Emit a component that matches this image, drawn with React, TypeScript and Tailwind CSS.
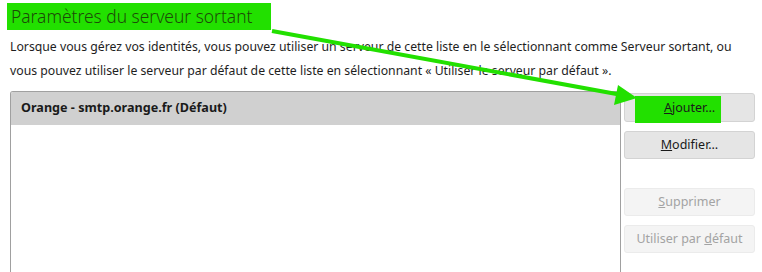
import React from "react";

function Btn({
  children,
  disabled,
  className = "",
}: {
  children: React.ReactNode;
  disabled?: boolean;
  className?: string;
}) {
  return (
    <div
      className={`relative h-[28px] pt-[1px] rounded-[3px] border flex items-center justify-center text-[12.5px] ${
        disabled
          ? "bg-[#f4f4f4] border-[#ebebeb] text-[#a3a3a3]"
          : "bg-[#e5e5e5] border-[#d3d3d3] text-[#1a1a1a]"
      } ${className}`}
    >
      {children}
    </div>
  );
}

export default function App() {
  return (
    <div className="relative w-[762px] h-[272px] overflow-hidden bg-white font-['Segoe_UI','Noto_Sans',sans-serif]">
      <div className="pl-[7px] pt-[3px]">
        <h1 className="inline-block bg-[#22e000] pl-[4px] pr-[19px] h-[27px] text-[17.4px] font-light leading-[27px] text-[#1d4a08]">
          Paramètres du serveur sortant
        </h1>
      </div>

      <div className="pl-[10px] mt-[5px] text-[12.25px] leading-[24px] text-[#1e1e1e] whitespace-nowrap">
        <p>
          Lorsque vous gérez vos identités, vous pouvez utiliser un serveur de cette liste en le sélectionnant comme Serveur sortant, ou
        </p>
        <p>
          vous pouvez utiliser le serveur par défaut de cette liste en sélectionnant « Utiliser le serveur par défaut ».
        </p>
      </div>

      <div className="flex mt-[8px] pl-[10px]">
        <div className="w-[611px] h-[181px] border border-b-0 border-[#a0a0a0] rounded-tl-[3px] overflow-hidden">
          <div className="h-[33px] bg-[#d0d0d0] pl-[10px] flex items-center text-[12.6px] font-bold text-[#1a1a1a]">
            Orange - smtp.orange.fr (Défaut)
          </div>
        </div>

        <div className="ml-[3px] w-[131px] flex flex-col pt-[2px]">
          <Btn className="h-[29px]">
            <span className="absolute left-[10px] top-[2px] w-[86px] h-[27px] bg-[#22e000]" />
            <span className="relative">
              <span className="underline">A</span>jouter…
            </span>
          </Btn>
          <Btn className="mt-[9px]">
            <span>
              <span className="underline">M</span>odifier…
            </span>
          </Btn>
          <Btn disabled className="mt-[29px]">
            <span>
              <span className="underline">S</span>upprimer
            </span>
          </Btn>
          <Btn disabled className="mt-[9px]">
            <span>
              Utiliser par <span className="underline">d</span>éfaut
            </span>
          </Btn>
        </div>
      </div>

      <svg
        className="absolute left-0 top-0 pointer-events-none"
        width="762"
        height="272"
        viewBox="0 0 762 272"
      >
        <line x1="272" y1="31" x2="622" y2="95" stroke="#22e000" strokeWidth="4" />
        <polygon points="618,85 637,98 614,105" fill="#22e000" />
      </svg>
    </div>
  );
}
